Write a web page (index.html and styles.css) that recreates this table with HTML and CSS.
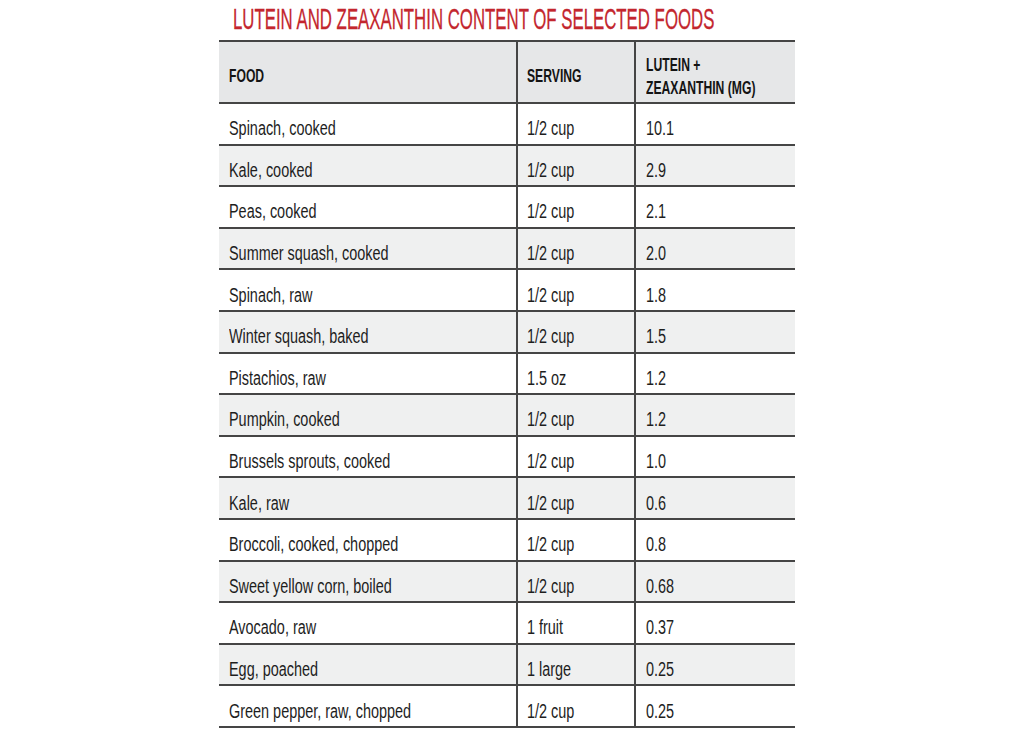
FILE: index.html
```html
<!DOCTYPE html>
<html lang="en">
<head>
<meta charset="utf-8">
<title>Lutein and Zeaxanthin Content of Selected Foods</title>
<link rel="stylesheet" href="styles.css">
</head>
<body>
<main class="sheet">
  <h1 class="title"><span class="title-text">LUTEIN AND ZEAXANTHIN CONTENT OF SELECTED FOODS</span></h1>
  <div class="table">
    <div class="row head">
      <div class="cell"><span class="th">FOOD</span></div>
      <div class="cell"><span class="th">SERVING</span></div>
      <div class="cell"><span class="th">LUTEIN +<br>ZEAXANTHIN (MG)</span></div>
    </div>
    <div class="row"><div class="cell"><span class="td">Spinach, cooked</span></div><div class="cell"><span class="td">1/2 cup</span></div><div class="cell"><span class="td">10.1</span></div></div>
    <div class="row alt"><div class="cell"><span class="td">Kale, cooked</span></div><div class="cell"><span class="td">1/2 cup</span></div><div class="cell"><span class="td">2.9</span></div></div>
    <div class="row"><div class="cell"><span class="td">Peas, cooked</span></div><div class="cell"><span class="td">1/2 cup</span></div><div class="cell"><span class="td">2.1</span></div></div>
    <div class="row alt"><div class="cell"><span class="td">Summer squash, cooked</span></div><div class="cell"><span class="td">1/2 cup</span></div><div class="cell"><span class="td">2.0</span></div></div>
    <div class="row"><div class="cell"><span class="td">Spinach, raw</span></div><div class="cell"><span class="td">1/2 cup</span></div><div class="cell"><span class="td">1.8</span></div></div>
    <div class="row alt"><div class="cell"><span class="td">Winter squash, baked</span></div><div class="cell"><span class="td">1/2 cup</span></div><div class="cell"><span class="td">1.5</span></div></div>
    <div class="row"><div class="cell"><span class="td">Pistachios, raw</span></div><div class="cell"><span class="td">1.5 oz</span></div><div class="cell"><span class="td">1.2</span></div></div>
    <div class="row alt"><div class="cell"><span class="td">Pumpkin, cooked</span></div><div class="cell"><span class="td">1/2 cup</span></div><div class="cell"><span class="td">1.2</span></div></div>
    <div class="row"><div class="cell"><span class="td">Brussels sprouts, cooked</span></div><div class="cell"><span class="td">1/2 cup</span></div><div class="cell"><span class="td">1.0</span></div></div>
    <div class="row alt"><div class="cell"><span class="td">Kale, raw</span></div><div class="cell"><span class="td">1/2 cup</span></div><div class="cell"><span class="td">0.6</span></div></div>
    <div class="row"><div class="cell"><span class="td">Broccoli, cooked, chopped</span></div><div class="cell"><span class="td">1/2 cup</span></div><div class="cell"><span class="td">0.8</span></div></div>
    <div class="row alt"><div class="cell"><span class="td">Sweet yellow corn, boiled</span></div><div class="cell"><span class="td">1/2 cup</span></div><div class="cell"><span class="td">0.68</span></div></div>
    <div class="row"><div class="cell"><span class="td">Avocado, raw</span></div><div class="cell"><span class="td">1 fruit</span></div><div class="cell"><span class="td">0.37</span></div></div>
    <div class="row alt"><div class="cell"><span class="td">Egg, poached</span></div><div class="cell"><span class="td">1 large</span></div><div class="cell"><span class="td">0.25</span></div></div>
    <div class="row"><div class="cell"><span class="td">Green pepper, raw, chopped</span></div><div class="cell"><span class="td">1/2 cup</span></div><div class="cell"><span class="td">0.25</span></div></div>
  </div>
</main>
</body>
</html>
```
FILE: styles.css
```css
html, body {
  margin: 0;
  padding: 0;
  background: #ffffff;
}

body {
  font-family: "Liberation Sans", Arial, sans-serif;
  color: #1e1e1e;
}

.sheet {
  width: 576px;
  margin-left: 219px;
}

.title {
  margin: 0 0 2px 0;
  padding-left: 14px;
  height: 38px;
  overflow: hidden;
  font-size: 30px;
  line-height: 38px;
  font-weight: normal;
  color: #c3262e;
  white-space: nowrap;
  -webkit-text-stroke: 0.3px #c3262e;
}

.title-text {
  display: inline-block;
  transform: scaleX(0.56);
  transform-origin: left center;
}

.table {
  border-top: 2px solid #454545;
}

.row {
  display: grid;
  grid-template-columns: 297px 118px 161px;
  height: 41.6px;
  box-sizing: border-box;
  border-bottom: 2px solid #454545;
  background: #ffffff;
}

.row.alt {
  background: #eff0f0;
}

.row.head {
  height: 62px;
  background: #e6e7e8;
}

.cell {
  display: flex;
  align-items: center;
  box-sizing: border-box;
  overflow: hidden;
  padding-top: 10px;
  padding-left: 10px;
  white-space: nowrap;
  font-size: 19.5px;
  line-height: 23px;
}

.cell + .cell {
  border-left: 2px solid #454545;
  padding-left: 9px;
}

.cell + .cell + .cell {
  padding-left: 10px;
}

.head .cell {
  padding-top: 7px;
  font-size: 19px;
}

.th {
  display: inline-block;
  font-weight: bold;
  color: #141414;
  transform: scaleX(0.64);
  transform-origin: left center;
}

.td {
  display: inline-block;
  transform: scaleX(0.74);
  transform-origin: left center;
}
```
